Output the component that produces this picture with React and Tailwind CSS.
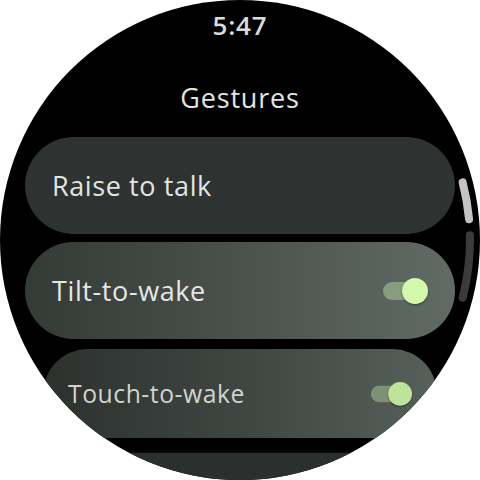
function Toggle({ dim }) {
  return (
    <div className="relative w-[45px] h-[26px] flex items-center">
      <div className={`w-[38px] h-[18px] rounded-full ${dim ? "bg-[#7f9174]" : "bg-[#8a9c7f]"}`} />
      <div
        className={`absolute right-0 top-0 w-[26px] h-[26px] rounded-full shadow-[0_1px_2px_rgba(0,0,0,0.45)] ${
          dim ? "bg-[#bfe39a]" : "bg-[#d3f8ab]"
        }`}
      />
    </div>
  );
}

function Chip({ label, toggle, className, textClass }) {
  return (
    <div
      className={`w-[430px] h-[97px] shrink-0 rounded-full flex items-center justify-between pl-[27px] pr-[27px] ${className}`}
    >
      <span className={`text-[27px] tracking-[0.6px] leading-none ${textClass}`}>{label}</span>
      {toggle && <Toggle dim={toggle === "dim"} />}
    </div>
  );
}

function ScrollIndicator() {
  // arc segments around the bezel, centre of the screen at 240,240
  const r = 230;
  const pt = (deg) => {
    const a = (deg * Math.PI) / 180;
    return `${240 + r * Math.cos(a)} ${240 + r * Math.sin(a)}`;
  };
  return (
    <svg className="absolute inset-0" width="480" height="480" viewBox="0 0 480 480">
      <path
        d={`M ${pt(-14.5)} A ${r} ${r} 0 0 1 ${pt(-5.2)}`}
        stroke="#c4c4c4"
        strokeWidth="8"
        strokeLinecap="round"
        fill="none"
      />
      <path
        d={`M ${pt(-1.2)} A ${r} ${r} 0 0 1 ${pt(14.5)}`}
        stroke="#3a3c3b"
        strokeWidth="8"
        strokeLinecap="round"
        fill="none"
      />
    </svg>
  );
}

export default function App() {
  return (
    <div
      className="w-[480px] h-[480px] bg-white"
      style={{ fontFamily: "'Open Sans', 'Noto Sans', sans-serif" }}
    >
      <div className="relative w-[480px] h-[480px] rounded-full bg-black overflow-hidden flex flex-col items-center">
        <div className="shrink-0 pt-[9px] h-[44px] text-[26px] font-semibold tracking-[0.8px] text-[#dadcda] leading-[32px]">
          5:47
        </div>
        <div className="shrink-0 mt-[38px] h-[55px] text-[27px] tracking-[0.8px] text-[#e2e4e1] leading-[32px]">
          Gestures
        </div>

        <div className="shrink-0 flex flex-col items-center gap-[8px]">
          <Chip label="Raise to talk" className="bg-[#2e3230]" textClass="text-[#e2e5e2]" />
          <Chip
            label="Tilt-to-wake"
            toggle="on"
            className="bg-gradient-to-r from-[#343a36] via-[#4a524d] to-[#616b65]"
            textClass="text-[#e4e7e3]"
          />
          <Chip
            label="Touch-to-wake"
            toggle="dim"
            className="scale-[0.915] -mt-[2px] bg-gradient-to-r from-[#2c312e] via-[#3f4642] to-[#57605a]"
            textClass="text-[#d0d4d0]"
          />
          <Chip label="" className="scale-[0.86] -mt-[4px] bg-[#2b2f2d]" textClass="" />
        </div>

        <ScrollIndicator />
      </div>
    </div>
  );
}
